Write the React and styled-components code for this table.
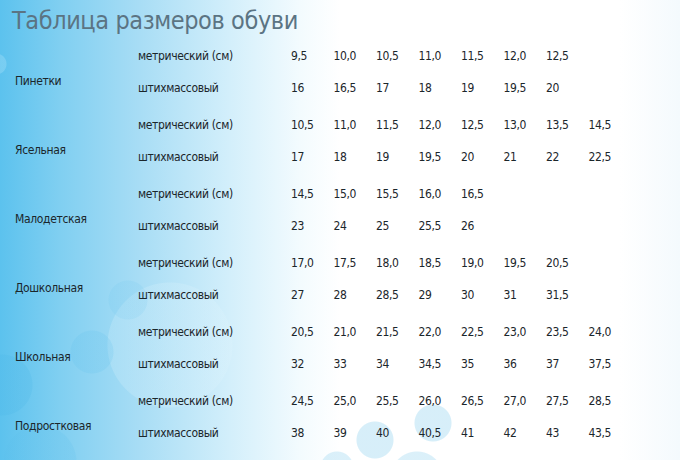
import React from "react";
import styled, { createGlobalStyle } from "styled-components";

const GlobalStyle = createGlobalStyle`
  html, body {
    margin: 0;
    padding: 0;
    width: 680px;
    height: 460px;
    overflow: hidden;
  }
  body {
    font-family: "DejaVu Sans Condensed", "DejaVu Sans", "Liberation Sans", sans-serif;
    font-stretch: condensed;
  }
`;

const sizes = [
  {
    name: "Пинетки",
    metric: ["9,5", "10,0", "10,5", "11,0", "11,5", "12,0", "12,5"],
    stich: ["16", "16,5", "17", "18", "19", "19,5", "20"],
  },
  {
    name: "Ясельная",
    metric: ["10,5", "11,0", "11,5", "12,0", "12,5", "13,0", "13,5", "14,5"],
    stich: ["17", "18", "19", "19,5", "20", "21", "22", "22,5"],
  },
  {
    name: "Малодетская",
    metric: ["14,5", "15,0", "15,5", "16,0", "16,5"],
    stich: ["23", "24", "25", "25,5", "26"],
  },
  {
    name: "Дошкольная",
    metric: ["17,0", "17,5", "18,0", "18,5", "19,0", "19,5", "20,5"],
    stich: ["27", "28", "28,5", "29", "30", "31", "31,5"],
  },
  {
    name: "Школьная",
    metric: ["20,5", "21,0", "21,5", "22,0", "22,5", "23,0", "23,5", "24,0"],
    stich: ["32", "33", "34", "34,5", "35", "36", "37", "37,5"],
  },
  {
    name: "Подростковая",
    metric: ["24,5", "25,0", "25,5", "26,0", "26,5", "27,0", "27,5", "28,5"],
    stich: ["38", "39", "40", "40,5", "41", "42", "43", "43,5"],
  },
];

const bubble = (x, y, r, c) =>
  `radial-gradient(circle at ${x}px ${y}px, ${c} ${r}px, transparent ${r + 1}px)`;

const Page = styled.div`
  width: 680px;
  height: 460px;
  box-sizing: border-box;
  overflow: hidden;
  background:
    ${bubble(375, 440, 18, "rgba(175, 222, 243, 0.5)")},
    ${bubble(433, 423, 18, "rgba(175, 222, 243, 0.5)")},
    ${bubble(337, 468, 16, "rgba(175, 222, 243, 0.45)")},
    ${bubble(417, 478, 26, "rgba(175, 222, 243, 0.45)")},
    ${bubble(92, 352, 21, "rgba(90, 190, 235, 0.18)")},
    ${bubble(128, 300, 19, "rgba(90, 190, 235, 0.12)")},
    ${bubble(170, 345, 62, "rgba(225, 245, 253, 0.22)")},
    ${bubble(2, 385, 30, "rgba(70, 180, 230, 0.2)")},
    ${bubble(40, 462, 36, "rgba(90, 190, 235, 0.18)")},
    ${bubble(-4, 64, 10, "rgba(170, 225, 248, 0.35)")},
    linear-gradient(
      to right,
      #5cc2ee 0px,
      #80cff1 60px,
      #a8ddf5 140px,
      #d3effb 230px,
      #f3fbfe 300px,
      #ffffff 340px,
      #ffffff 620px,
      #f4fafd 680px
    );
  padding: 0 0 0 15px;
`;

const Title = styled.h1`
  margin: 0 0 0 -3px;
  height: 40px;
  line-height: 42px;
  font-size: 25px;
  font-weight: normal;
  color: #5b7483;
  letter-spacing: -0.4px;
`;

const Group = styled.div`
  display: grid;
  grid-template-columns: 123px 153px repeat(8, 42.5px);
  grid-template-rows: 32px 32px;
  margin-bottom: 5px;
  font-size: 12px;
  letter-spacing: -0.35px;
  color: #1b262b;
`;

const Category = styled.div`
  grid-row: 1 / span 2;
  grid-column: 1;
  padding-top: 33px;
  line-height: 16px;
`;

const Cell = styled.div`
  grid-row: ${(p) => p.$row};
  display: flex;
  align-items: center;
  white-space: nowrap;
`;

const App = () => (
  <>
    <GlobalStyle />
    <Page>
      <Title>Таблица размеров обуви</Title>
      {sizes.map((g) => (
        <Group key={g.name}>
          <Category>{g.name}</Category>
          <Cell $row={1}>метрический (см)</Cell>
          {g.metric.map((v, i) => (
            <Cell key={"m" + i} $row={1}>
              {v}
            </Cell>
          ))}
          <Cell $row={2}>штихмассовый</Cell>
          {g.stich.map((v, i) => (
            <Cell key={"s" + i} $row={2}>
              {v}
            </Cell>
          ))}
        </Group>
      ))}
    </Page>
  </>
);

export default App;
